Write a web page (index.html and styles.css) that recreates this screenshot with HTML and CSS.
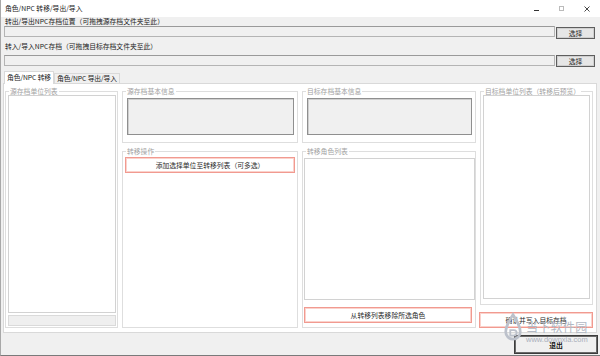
FILE: index.html
```html
<!DOCTYPE html>
<html lang="zh-CN">
<head>
<meta charset="utf-8">
<title>角色/NPC 转移/导出/导入</title>
<link rel="stylesheet" href="styles.css">
</head>
<body>
<div class="window">
  <div class="titlebar">
    <span class="title">角色/NPC 转移/导出/导入</span>
    <div class="controls">
      <svg class="ctl" width="25" height="17" viewBox="0 0 25 17"><path d="M10 10.5h5" stroke="#333" stroke-width="1"/></svg>
      <svg class="ctl" width="25" height="17" viewBox="0 0 25 17"><rect x="10.5" y="6.5" width="4" height="4" fill="none" stroke="#bbb" stroke-width="1"/></svg>
      <svg class="ctl" width="25" height="17" viewBox="0 0 25 17"><path d="M10.5 6.5l5 5M15.5 6.5l-5 5" stroke="#333" stroke-width="0.9"/></svg>
    </div>
  </div>
  <div class="main">
    <div class="field-label first">转出/导出NPC存档位置（可拖拽源存档文件夹至此）</div>
    <div class="path-row">
      <div class="path-box"></div>
      <button class="btn-select shift">选择</button>
    </div>
    <div class="field-label second">转入/导入NPC存档（可拖拽目标存档文件夹至此）</div>
    <div class="path-row row2">
      <div class="path-box"></div>
      <button class="btn-select">选择</button>
    </div>
    <div class="tabs">
      <div class="tab active">角色/NPC 转移</div>
      <div class="tab">角色/NPC 导出/导入</div>
    </div>
    <div class="panel">
      <div class="grid">
        <div class="group g-src">
          <div class="gtitle">源存档单位列表</div>
          <div class="listbox lb-src"></div>
          <div class="bar"></div>
        </div>
        <div class="col">
          <div class="group g-info">
            <div class="gtitle">源存档基本信息</div>
            <div class="infobox"></div>
          </div>
          <div class="group g-low">
            <div class="gtitle">转移操作</div>
            <button class="btn-red btn-add">添加选择单位至转移列表（可多选）</button>
          </div>
        </div>
        <div class="col">
          <div class="group g-info">
            <div class="gtitle">目标存档基本信息</div>
            <div class="infobox"></div>
          </div>
          <div class="group g-low">
            <div class="gtitle">转移角色列表</div>
            <div class="listbox lb-move"></div>
            <button class="btn-red btn-remove">从转移列表移除所选角色</button>
          </div>
        </div>
        <div class="col">
          <div class="group g-dst">
            <div class="gtitle">目标档单位列表（转移后预览）</div>
            <div class="listbox lb-dst"></div>
          </div>
          <button class="btn-red btn-confirm">确认并写入目标存档</button>
        </div>
      </div>
    </div>
  </div>
  <div class="footer">
    <button class="btn-exit">退出</button>
  </div>
  <div class="watermark">
    <svg class="wm-logo" width="20" height="40" viewBox="0 0 22 40">
      <path d="M11 2 C6 10 3 15 3 21 a8 8 0 0 0 16 0 C19 15 16 10 11 2 Z" fill="none" stroke="#bcc1cb" stroke-width="3"/>
      <path d="M8 19 h4 a3 3 0 0 1 0 6 h-4 Z" fill="none" stroke="#bcc1cb" stroke-width="2"/>
    </svg>
    <div class="wm-text">
      <div class="wm-big">当下软件园</div>
      <div class="wm-small">www.downxia.com</div>
    </div>
  </div>
</div>
</body>
</html>
```

FILE: styles.css
```css
* { box-sizing: border-box; }
html, body { margin: 0; padding: 0; }
body {
  width: 600px;
  height: 356px;
  overflow: hidden;
  background: #f0f0f0;
  font-family: "Noto Sans CJK SC", "Noto Sans", sans-serif;
  font-size: 6.8px;
  color: #1e1e1e;
}
.window {
  position: relative;
  width: 600px;
  height: 356px;
  background: #f0f0f0;
  border-left: 1px solid #a8a8a8;
  border-bottom: 1px solid #7a7a7a;
}
.titlebar {
  height: 17px;
  background: #fff;
  display: flex;
  align-items: center;
  justify-content: space-between;
}
.title {
  margin-left: 4px;
  line-height: 9px;
  color: #222;
}
.controls { display: flex; margin-right: 1px; }
.ctl { display: block; }

.main { padding: 0 3px 0 2px; }
.field-label {
  line-height: 9px;
  height: 9px;
  padding-left: 2px;
  color: #222;
  white-space: nowrap;
}
.field-label.second { margin-top: 3px; }
.path-row {
  display: flex;
  align-items: flex-start;
  height: 13px;
}
.path-row.row2 { margin-top: 4px; height: 12px; }
.path-box {
  flex: 1;
  height: 11px;
  margin-left: 1px;
  background: #f0f0f0;
  border: 1px solid #b4b4b4;
  border-top-color: #9a9a9a;
}
.btn-select {
  width: 39px;
  height: 12px;
  margin-left: 1px;
  margin-right: 2px;
  padding: 0;
  font: inherit;
  line-height: 10px;
  color: #1e1e1e;
  background: #e6e6e6;
  border: 1px solid #5e5e5e;
  box-shadow: inset 0 0 0 1px #cfcfcf;
}
.btn-select.shift { margin-top: 1px; }

.tabs {
  display: flex;
  align-items: flex-end;
  margin-top: 4px;
  height: 12px;
  padding-left: 1px;
}
.tab {
  height: 10px;
  line-height: 9px;
  padding: 0 2px;
  background: #f0f0f0;
  border: 1px solid #d9d9d9;
  border-bottom: none;
  color: #222;
  white-space: nowrap;
  letter-spacing: -0.1px;
}
.tab.active {
  min-width: 49px;
  height: 13px;
  margin-bottom: -1px;
  line-height: 11px;
  padding: 0 2px;
  background: #fff;
}
.panel {
  height: 250px;
  background: #fff;
  border: 1px solid #d9d9d9;
  padding: 7px 0 0 1px;
}
.grid {
  display: grid;
  grid-template-columns: 113px 176px 174px 113px;
  column-gap: 4px;
  height: 237px;
}
.col { display: flex; flex-direction: column; }

.group {
  border: 1px solid #dedede;
  background: #fff;
}
.gtitle {
  display: table;
  margin: -4px 0 0 3px;
  padding: 0 1px;
  height: 7px;
  line-height: 7px;
  background: #fff;
  color: #a2a2a2;
  white-space: nowrap;
}
.listbox {
  background: #fff;
  border: 1px solid #d2d2d2;
}
.g-src { height: 237px; }
.lb-src { height: 218px; margin: 0 1px 0 2px; }
.bar {
  height: 11px;
  margin: 2px 1px 0 2px;
  background: #efefef;
  border: 1px solid #dadada;
}
.g-info { height: 52px; }
.infobox {
  height: 37px;
  margin: 3px 3px 0 4px;
  background: #f0f0f0;
  border: 1px solid #8f8f8f;
  box-shadow: inset 1px 1px 0 #cfcfcf;
}
.g-low { height: 177px; margin-top: 8px; }

.btn-red {
  display: block;
  padding: 0;
  font: inherit;
  color: #2a2a2a;
  background: #fff;
  border: 1px solid #f19a90;
  box-shadow: inset 0 0 0 1px #fbd2cc;
  text-align: center;
  white-space: nowrap;
}
.btn-add { width: 170px; height: 16px; margin: 2px 0 0 2px; }
.lb-move { height: 142px; margin: 3px 0 0 1px; width: 171px; }
.btn-remove { width: 168px; height: 16px; margin: 7px 0 0 1px; }
.g-dst { height: 214px; }
.lb-dst { height: 204px; margin: 0 2px 0 2px; }
.btn-confirm { width: 114px; height: 16px; margin: 7px 0 0 -1px; }

.footer {
  height: 22px;
  display: flex;
  justify-content: flex-end;
  padding: 2px 2px 0 0;
}
.btn-exit {
  width: 84px;
  height: 19px;
  padding: 0;
  font: inherit;
  font-weight: bold;
  color: #111;
  background: #f0f0f0;
  border: 1px solid #3c3c3c;
  box-shadow: inset 0 0 0 1px #6a6a6a;
}

.watermark {
  position: absolute;
  left: 502px;
  top: 311px;
  display: flex;
  align-items: center;
  gap: 3px;
  pointer-events: none;
}
.wm-logo { display: block; }
.wm-text { display: flex; flex-direction: column; }
.wm-big {
  font-size: 12px;
  line-height: 17px;
  letter-spacing: 0.3px;
  color: #b3b9c4;
  white-space: nowrap;
}
.wm-small {
  font-family: "Liberation Sans", sans-serif;
  font-size: 7.5px;
  line-height: 9px;
  color: #a9afbb;
  white-space: nowrap;
}
```
